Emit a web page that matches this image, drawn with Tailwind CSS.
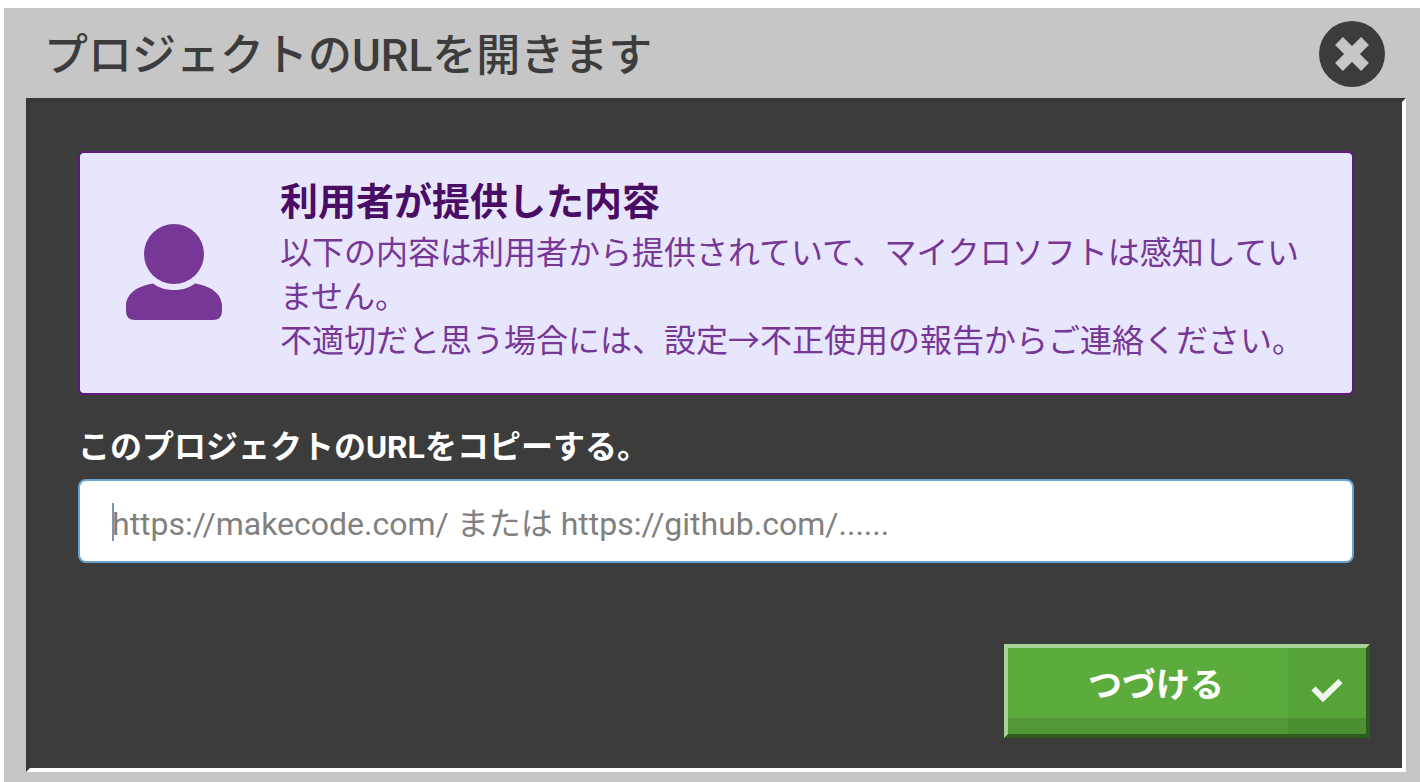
<!DOCTYPE html>
<html lang="ja">
<head>
  <meta charset="UTF-8">
  <meta name="viewport" content="width=device-width, initial-scale=1.0">
  <title>プロジェクトのURLを開きます</title>
  <script src="https://cdn.jsdelivr.net/npm/@tailwindcss/browser@4"></script>
</head>
<body class="bg-white font-['Roboto','Noto_Sans_CJK_JP',sans-serif]">

  <div class="flex min-h-screen flex-col pt-2 pl-1">
    <div role="dialog" aria-labelledby="dialog-title" class="flex grow flex-col bg-[#c6c6c6] pr-3.5 pb-2.5 pl-[22px]">

      <!-- Title bar -->
      <header class="flex h-[90px] items-center justify-between pr-5 pl-[18px]">
        <h1 id="dialog-title" class="pt-1.5 text-[44px] leading-[60px] font-medium text-[#3c3c3c]">プロジェクトのURLを開きます</h1>
        <button type="button" aria-label="閉じる" class="size-[68px] text-[#3c3c3c]">
          <svg viewBox="0 0 68 68" class="size-[68px]" aria-hidden="true">
            <circle cx="34" cy="35" r="33" fill="currentColor"/>
            <path d="M21 22L47 48M47 22L21 48" stroke="#c6c6c6" stroke-width="11"/>
          </svg>
        </button>
      </header>

      <!-- Content -->
      <main class="flex grow flex-col border-4 border-t-[#373737] border-r-white border-b-white border-l-[#373737] bg-[#3c3c3c]">
        <div class="px-12 pt-[49px]">

          <section class="flex items-center rounded-md border-2 border-[#5c1a7e] bg-[#e8e6fc] pt-6 pr-6 pb-[30px] pl-[46px]">
            <svg viewBox="0 0 96 96" class="mt-1 size-24 shrink-0 text-[#763796]" fill="currentColor" aria-hidden="true">
              <circle cx="48" cy="30" r="30"/>
              <path d="M27 59.500C33 64 40 66 48 66S63 64 69 59.500C85 62 96 70 96 82V87Q96 96 87 96H9Q0 96 0 87V82C0 70 11 62 27 59.500Z"/>
            </svg>
            <div class="ml-[58px]">
              <h2 class="text-[38px] leading-[50px] font-bold text-[#4a0d66]">利用者が提供した内容</h2>
              <p class="pt-1 text-[32px] leading-11 text-[#763796]">以下の内容は利用者から提供されていて、マイクロソフトは感知していません。<br>不適切だと思う場合には、設定→不正使用の報告からご連絡ください。</p>
            </div>
          </section>

          <form>
            <label for="project-url" class="mt-7 block text-[32px] leading-12 font-bold text-white">このプロジェクトのURLをコピーする。</label>
            <div class="relative mt-2">
              <input id="project-url" type="text" placeholder="https://makecode.com/ または https://github.com/......" class="block h-[84px] w-full rounded-lg border-2 border-[#6ba3d0] bg-white px-8 pt-1.5 text-[32px] text-gray-900 caret-transparent outline-none placeholder:text-[#808080]">
              <span class="absolute top-6 left-[34px] h-[38px] w-0.5 bg-[#7d96ad]"></span>
            </div>
          </form>
        </div>

        <!-- Actions -->
        <div class="mt-auto flex justify-end pr-8 pb-[30px]">
          <button type="button" class="flex h-[94px] w-[366px] items-stretch border-4 border-t-[#a9d396] border-r-[#2d5c1e] border-b-[#2d5c1e] border-l-[#a9d396] bg-[#5bac3c] text-white shadow-[inset_0_-16px_0_#519736]">
            <span class="grow pt-1 pl-4 text-[34px] leading-[66px] font-bold">つづける</span>
            <span class="flex w-[78px] items-center justify-center bg-black/5">
              <svg viewBox="0 0 32 24" class="h-6 w-8" fill="none" stroke="#f0f7ed" stroke-width="6" aria-hidden="true">
                <path d="M2.500 9.500L12 19L29.500 2"/>
              </svg>
            </span>
          </button>
        </div>
      </main>
    </div>
  </div>

</body>
</html>
